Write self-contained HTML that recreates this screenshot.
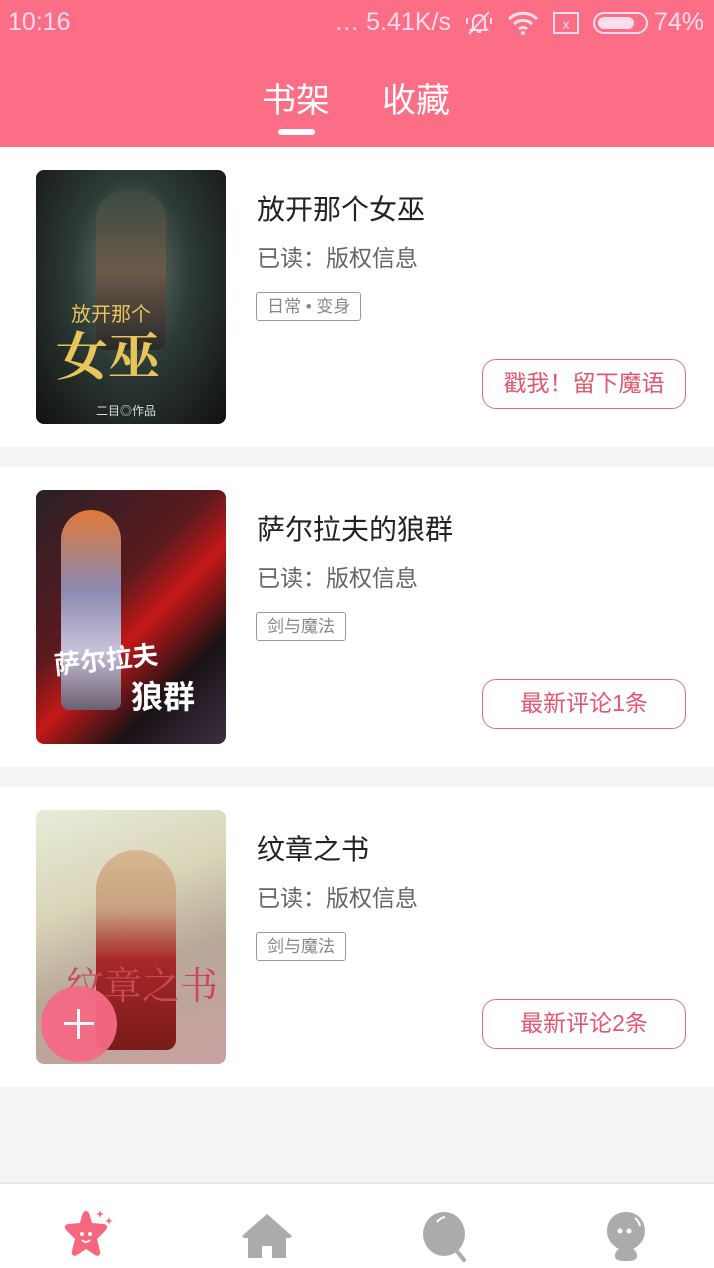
<!DOCTYPE html>
<html><head><meta charset="utf-8"><style>
*{margin:0;padding:0;box-sizing:border-box}
body{width:714px;height:1268px;background:#f4f4f4;font-family:"Liberation Sans","Noto Sans CJK SC",sans-serif;position:relative;overflow:hidden}
.top{position:absolute;left:0;top:0;width:714px;height:147px;background:#fc6e86;color:#fff}
.card{position:absolute;left:0;width:714px;height:300px;background:#fff}
.cover{position:absolute;left:36px;top:23px;width:190px;height:254px;border-radius:8px;overflow:hidden}
.t{position:absolute;left:257px;top:41px;font-size:28px;color:#222}
.r{position:absolute;left:257px;top:92px;font-size:23px;color:#666}
.tag{position:absolute;left:256px;top:145px;height:29px;padding:0 10px;border:1px solid #999;border-radius:3px;font-size:17px;line-height:27px;color:#888}
.btn{position:absolute;left:482px;top:212px;width:204px;height:50px;border:1.5px solid #e96a82;border-radius:14px;color:#e2566f;font-size:23px;line-height:47px;text-align:center}
.bar{position:absolute;left:0;top:1182px;width:714px;height:86px;background:#fff;border-top:2px solid #e8e8e8}
</style></head><body>
<div class="top">
<div style="position:absolute;left:8px;top:8px;font-size:25px;color:#fde">10:16</div>
<div style="position:absolute;right:10px;top:8px;font-size:25px;display:flex;align-items:center;gap:14px;color:#fde">
<span>… 5.41K/s</span>
<svg width="28" height="26" viewBox="0 0 28 26" fill="none" stroke="#fde" stroke-width="2"><path d="M8 18V11a6 6 0 0 1 12 0v7l2 2H6z M12 22h4 M4 24L24 2 M2 8v6 M26 8v6"/></svg>
<svg width="32" height="24" viewBox="0 0 32 24" fill="none" stroke="#fde" stroke-width="3"><path d="M2 8a20 20 0 0 1 28 0M7 13a13 13 0 0 1 18 0M12 18a6 6 0 0 1 8 0"/><circle cx="16" cy="22" r="2" fill="#fde" stroke="none"/></svg>
<svg width="26" height="22" viewBox="0 0 26 22"><rect x="1" y="1" width="24" height="20" fill="none" stroke="#fde" stroke-width="2"/><text x="13" y="17" font-size="14" fill="#fde" text-anchor="middle" font-family="Liberation Sans">x</text></svg>
<span style="display:inline-block;width:55px;height:22px;border:2px solid #fde;border-radius:11px;padding:3px"><span style="display:block;width:36px;height:12px;background:#fde;border-radius:6px"></span></span>
<span style="margin-left:-8px">74%</span>
</div>
<div style="position:absolute;left:262px;top:79px;font-size:34px;line-height:44px">书架</div>
<div style="position:absolute;left:382px;top:79px;font-size:34px;line-height:44px">收藏</div>
<div style="position:absolute;left:278px;top:129px;width:37px;height:6px;border-radius:3px;background:#fff"></div>
</div>

<div class="card" style="top:147px">
<div class="cover" style="background:radial-gradient(ellipse at 50% 40%,#6a7a70 0%,#2c3a36 45%,#111 100%)">
<div style="position:absolute;left:60px;top:20px;width:70px;height:160px;background:linear-gradient(#3a4a40,#6b5a4a,#2a2a2a);border-radius:30px 30px 10px 10px"></div>
<div style="position:absolute;left:20px;top:145px;font-size:52px;color:#e8c45a;font-weight:bold;font-family:'Noto Serif CJK SC',serif">女巫</div>
<div style="position:absolute;left:35px;top:128px;font-size:20px;color:#e8c45a">放开那个</div>
<div style="position:absolute;left:60px;top:232px;font-size:12px;color:#ddd">二目◎作品</div>
</div>
<div class="t">放开那个女巫</div><div class="r">已读：版权信息</div>
<div class="tag">日常 • 变身</div><div class="btn">戳我！留下魔语</div>
</div>

<div class="card" style="top:467px">
<div class="cover" style="background:linear-gradient(135deg,#2a2028 0%,#5a1a1e 40%,#c41818 55%,#1a1216 75%,#3a3040 100%)">
<div style="position:absolute;left:25px;top:20px;width:60px;height:200px;background:linear-gradient(#e0783a,#8a8ab0 40%,#c8c0d8 70%,#6a6070);border-radius:30px 30px 8px 8px"></div>
<div style="position:absolute;left:18px;top:150px;font-size:26px;color:#fff;font-weight:bold;transform:rotate(-6deg)">萨尔拉夫</div>
<div style="position:absolute;left:95px;top:182px;font-size:32px;color:#fff;font-weight:bold">狼群</div>
</div>
<div class="t">萨尔拉夫的狼群</div><div class="r">已读：版权信息</div>
<div class="tag">剑与魔法</div><div class="btn">最新评论1条</div>
</div>

<div class="card" style="top:787px">
<div class="cover" style="background:linear-gradient(160deg,#e8ecd8 0%,#d8d4b8 35%,#b8a898 60%,#c8a0a0 100%)">
<div style="position:absolute;left:60px;top:40px;width:80px;height:200px;background:linear-gradient(#d8b890,#c8a080 30%,#a82828 55%,#7a1a1a);border-radius:40px 40px 10px 10px"></div>
<div style="position:absolute;left:30px;top:145px;font-size:38px;color:#c8485a;font-family:'Noto Serif CJK SC',serif">纹章之书</div>
</div>
<div style="position:absolute;left:41px;top:199px;width:76px;height:76px;border-radius:50%;background:#f56a84;opacity:.95">
<div style="position:absolute;left:36px;top:23px;width:3px;height:30px;background:#fff"></div>
<div style="position:absolute;left:23px;top:36px;width:30px;height:3px;background:#fff"></div></div>
<div class="t">纹章之书</div><div class="r">已读：版权信息</div>
<div class="tag">剑与魔法</div><div class="btn">最新评论2条</div>
</div>

<div class="bar">
<svg style="position:absolute;left:58px;top:22px" width="62" height="54" viewBox="0 0 62 52">
<path d="M28 4c3 0 4 4 6 12l12 1c4 1 4 4 1 7l-8 8 3 12c1 4-2 6-5 4l-9-6-9 6c-3 2-6 0-5-4l3-12-8-8c-3-3-3-6 1-7l12-1c2-8 3-12 6-12z" fill="#f7687f"/>
<circle cx="24" cy="27" r="2" fill="#fff"/><circle cx="32" cy="27" r="2" fill="#fff"/>
<path d="M24 33q4 4 8 0" stroke="#fff" stroke-width="1.6" fill="none"/>
<path d="M42 3l1 3 3 1-3 1-1 3-1-3-3-1 3-1z M51 10l1 3 3 1-3 1-1 3-1-3-3-1 3-1z" fill="#f7687f"/></svg>
<svg style="position:absolute;left:240px;top:28px" width="54" height="48" viewBox="0 0 54 48"><path d="M27 2L2 24l2 2h4v20h14V34h10v12h14V26h4l2-2z" fill="#ababab"/></svg>
<svg style="position:absolute;left:420px;top:28px" width="52" height="50" viewBox="0 0 52 50"><ellipse cx="24" cy="22" rx="21" ry="22" fill="#ababab"/><path d="M36 38l8 10" stroke="#ababab" stroke-width="4" stroke-linecap="round"/><path d="M17 10q3-4 8-5" stroke="#fff" stroke-width="2" fill="none"/></svg>
<svg style="position:absolute;left:602px;top:26px" width="48" height="52" viewBox="0 0 48 52"><path d="M24 2c12 0 19 9 19 19 0 9-6 15-12 18 3 2 4 4 4 7 0 4-4 5-11 5s-11-1-11-5c0-3 1-5 4-7C11 36 5 30 5 21 5 11 12 2 24 2z" fill="#ababab"/><circle cx="18" cy="21" r="2.5" fill="#fff"/><circle cx="27" cy="21" r="2.5" fill="#fff"/><path d="M33 8q4 3 5 8" stroke="#fff" stroke-width="2" fill="none"/></svg>
</div>
</body></html>
